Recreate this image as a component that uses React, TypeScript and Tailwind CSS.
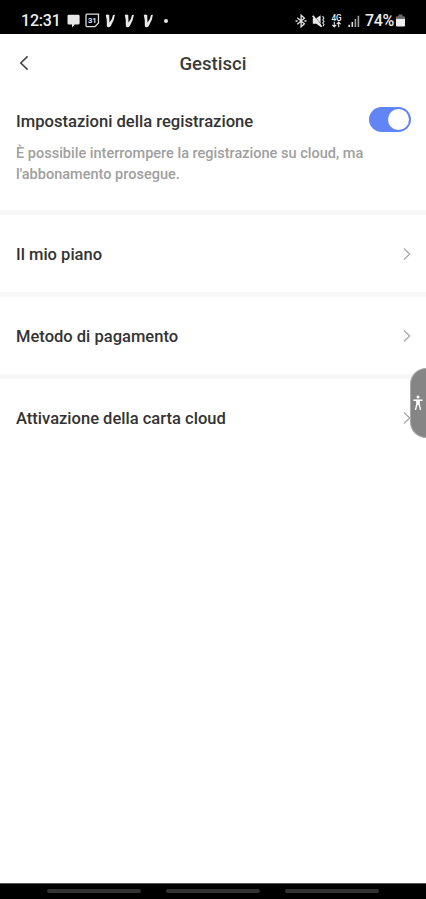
interface MenuRow {
  label: string;
}

const MENU_ROWS: MenuRow[] = [
  { label: "Il mio piano" },
  { label: "Metodo di pagamento" },
  { label: "Attivazione della carta cloud" },
];

function VIcon() {
  return (
    <svg width="11" height="14" viewBox="0 0 11 14" fill="#e8e8e8">
      <path d="M.8 1Q2.4.2 4.2 1L4.5 8.4Q7.6 4.8 8 1.1L9.9.8Q9.4 6.6 5.8 12 4.8 13.3 3.2 13.2 1.8 13.1 1.8 11.6Q2.2 5.5.8 1Z" />
    </svg>
  );
}

function StatusBar() {
  return (
    <div className="flex h-[34px] shrink-0 items-center justify-between bg-black pt-[7px] pr-[21px] pl-[21px] text-white">
      <div className="flex h-5 items-center">
        <span className="w-[46px] text-[16px] leading-5 font-medium tracking-[-0.2px] text-[#ededed]">
          12:31
        </span>
        <svg className="mr-[5px]" width="13" height="14" viewBox="0 0 13 14" fill="#e8e8e8">
          <path d="M1.9.8h9.3Q12.6.8 12.6 2.2V9.2Q12.6 10.6 11.2 10.6H7.7L5 13.4V10.6H1.9Q.5 10.6.5 9.2V2.2Q.5.8 1.9.8Z" />
        </svg>
        <svg className="mr-[5px]" width="15" height="15" viewBox="0 0 15 15" fill="none" stroke="#dedede">
          <path d="M2 1.2H13.5V9.9L9.9 13.6H2Q1 13.6 1 12.6V2.2Q1 1.2 2 1.2Z" strokeWidth="1.3" />
          <text
            x="7.3"
            y="10.1"
            textAnchor="middle"
            fontFamily="Roboto, sans-serif"
            fontSize="7.6"
            fontWeight="700"
            fill="#e8e8e8"
            stroke="none"
          >
            31
          </text>
        </svg>
        <div className="flex gap-[8px]">
          <VIcon />
          <VIcon />
          <VIcon />
        </div>
        <span className="ml-[10px] size-1 rounded-full bg-[#e8e8e8]" />
      </div>

      <div className="flex h-5 items-center">
        <svg className="mr-[5px]" width="12" height="14" viewBox="0 0 12 14" fill="none" stroke="#e4e4e4" strokeWidth="1.3">
          <path d="M2.3 3.8 9.4 9.7 6.1 12.8V1.2L9.4 4.2 2.3 10.2" />
          <path d="M.5 7h2.1M9.4 7h2.1" strokeWidth="1.6" />
        </svg>
        <svg className="mr-[5px]" width="14" height="14" viewBox="0 0 14 14" fill="#e8e8e8">
          <path d="M.8 4.2H4.2L8.6 1.2V12.7L4.2 9.8H.8Z" />
          <path d="M1.6 1.2 10.4 12.2" stroke="#000" strokeWidth=".6" />
          <path d="M.7 1.8 9.6 12.8" stroke="#e8e8e8" strokeWidth="1.8" />
          <path d="M10.6 2 11.8 4 10.8 6 12 7.5 10.8 9 12 10.5 11 12.2" fill="none" stroke="#d6d6d6" strokeWidth="1.2" />
        </svg>
        <svg className="mr-[6px]" width="11" height="14" viewBox="0 0 11 14">
          <text x="5.5" y="6.6" textAnchor="middle" fontFamily="Roboto, sans-serif" fontSize="8.2" fontWeight="500" fill="#eee">
            4G
          </text>
          <path
            d="M3.3 7.8v5M1.4 10.9 3.3 12.9 5.2 10.9M7.7 13.2V8.2M5.8 10.1 7.7 8.1 9.6 10.1"
            fill="none"
            stroke="#e4e4e4"
            strokeWidth="1.1"
          />
        </svg>
        <svg className="mr-[5px]" width="12" height="14" viewBox="0 0 12 14">
          <path d="M.4 10.7h1.6V13H.4ZM3.5 8h1.6v5H3.5Z" fill="#e0e0e0" />
          <path d="M6.6 5h1.6v8H6.6ZM9.6 1.8h1.6V13H9.6Z" fill="#a5a5a5" />
        </svg>
        <span className="w-[31px] text-[16px] leading-5 font-medium tracking-[-0.4px] text-[#ededed]">
          74%
        </span>
        <svg width="9" height="13" viewBox="0 0 9 13">
          <path d="M2.5.5h4v1.7H8Q9 2.2 9 3.2V4.7H0V3.2Q0 2.2 1 2.2h1.5Z" fill="#666" />
          <path d="M0 4.7H9V11.5Q9 12.5 8 12.5H1Q0 12.5 0 11.5Z" fill="#efefef" />
        </svg>
      </div>
    </div>
  );
}

function Header() {
  return (
    <header className="grid h-[58px] shrink-0 grid-cols-[1fr_auto_1fr] items-center px-[19px]">
      <svg width="10" height="16" viewBox="0 0 10 16" fill="none" stroke="#444" strokeWidth="1.6">
        <path d="M8.6 1.4 1.8 8 8.6 14.6" />
      </svg>
      <h1 className="pt-px text-[18.6px] leading-6 font-medium text-[#3a3a3a]">Gestisci</h1>
    </header>
  );
}

function RecordingSettings() {
  return (
    <section className="h-[118px] shrink-0 pt-[15px] pr-[15px] pl-4">
      <div className="flex items-start justify-between">
        <h2 className="pt-[2px] text-[16.6px] leading-[26px] font-medium whitespace-nowrap text-[#333]">
          Impostazioni della registrazione
        </h2>
        <div className="flex h-[25px] w-[42px] items-center justify-end rounded-full bg-[#6285f6] pr-[2px]">
          <span className="size-[21px] rounded-full bg-white" />
        </div>
      </div>
      <p className="mt-[9px] text-[14.53px] leading-[20.5px] font-medium whitespace-nowrap text-[#a0a0a0]">
        È possibile interrompere la registrazione su cloud, ma
        <br />
        l&apos;abbonamento prosegue.
      </p>
    </section>
  );
}

function AccessibilityTab() {
  return (
    <div className="absolute top-[368px] right-0 flex h-[70px] w-4 items-center justify-center rounded-l-[16px] border border-r-0 border-[#aaa] bg-[#858585] pr-[2px]">
      <svg width="10" height="16" viewBox="0 0 10 16" fill="none" stroke="#fff">
        <circle cx="5" cy="1.9" r="1.5" fill="#fff" stroke="none" />
        <path d="M.4 5.2H9.6" strokeWidth="1.5" />
        <path d="M3.2 5H6.8V10H3.2Z" fill="#fff" stroke="none" />
        <path d="M3.9 9 2.5 14.8M6.1 9 7.5 14.8" strokeWidth="1.4" />
      </svg>
    </div>
  );
}

export default function App() {
  return (
    <div className="relative flex h-[899px] w-[426px] flex-col overflow-hidden bg-white font-['Roboto',sans-serif]">
      <StatusBar />
      <Header />
      <RecordingSettings />
      <nav className="flex-1">
        {MENU_ROWS.map((row) => (
          <div
            key={row.label}
            className="flex h-[81.8px] items-center justify-between border-t-[5px] border-[#f7f7f7] pt-[4px] pr-[14px] pl-4"
          >
            <span className="text-[16.55px] leading-6 font-medium text-[#333]">{row.label}</span>
            <svg className="-mt-[2px]" width="10" height="14" viewBox="0 0 10 14" fill="none" stroke="#aaa" strokeWidth="1.3">
              <path d="M2 1.5 7.7 7 2 12.5" />
            </svg>
          </div>
        ))}
      </nav>
      <footer className="flex h-4 shrink-0 justify-center gap-[25px] border-t border-[#555] bg-black pt-[5px]">
        <span className="h-1 w-[94px] rounded-full bg-[#333]" />
        <span className="h-1 w-[94px] rounded-full bg-[#333]" />
        <span className="h-1 w-[94px] rounded-full bg-[#333]" />
      </footer>
      <AccessibilityTab />
    </div>
  );
}
